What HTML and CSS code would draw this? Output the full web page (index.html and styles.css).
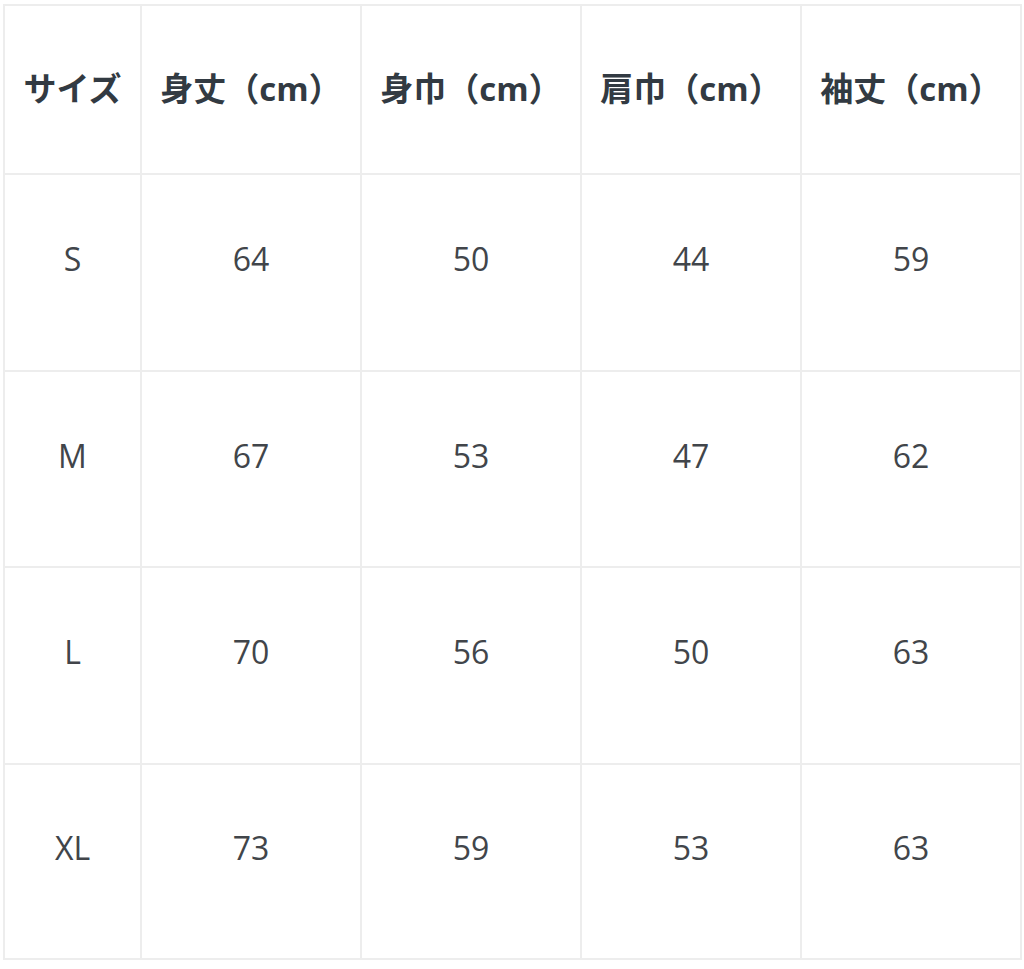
FILE: index.html
```html
<!DOCTYPE html>
<html lang="ja">
<head>
<meta charset="utf-8">
<title>サイズ表</title>
<link rel="stylesheet" href="styles.css">
</head>
<body>
<table class="size-table">
  <colgroup>
    <col class="c-size">
    <col class="c-val">
    <col class="c-val">
    <col class="c-val">
    <col class="c-val">
  </colgroup>
  <thead>
    <tr class="head-row">
      <th>サイズ</th>
      <th>身丈（cm）</th>
      <th>身巾（cm）</th>
      <th>肩巾（cm）</th>
      <th>袖丈（cm）</th>
    </tr>
  </thead>
  <tbody>
    <tr class="row r1"><td>S</td><td>64</td><td>50</td><td>44</td><td>59</td></tr>
    <tr class="row r2"><td>M</td><td>67</td><td>53</td><td>47</td><td>62</td></tr>
    <tr class="row r3"><td>L</td><td>70</td><td>56</td><td>50</td><td>63</td></tr>
    <tr class="row r4"><td>XL</td><td>73</td><td>59</td><td>53</td><td>63</td></tr>
  </tbody>
</table>
</body>
</html>
```

FILE: styles.css
```css
html, body {
  margin: 0;
  padding: 0;
  background: #ffffff;
}

body {
  padding: 4px 0 0 3px;
  font-family: "Open Sans", "Noto Sans CJK JP", sans-serif;
  color: #3a3a3a;
}

.size-table {
  border-collapse: collapse;
  table-layout: fixed;
  width: 1019px;
}

.c-size { width: 137px; }
.c-val { width: 220px; }

.size-table th,
.size-table td {
  border: 2px solid #ededed;
  text-align: center;
  vertical-align: middle;
  padding: 0;
}

.size-table th {
  font-weight: 700;
  font-size: 33px;
  color: #323a42;
  white-space: nowrap;
  padding-bottom: 5px;
}

.head-row { height: 169px; }

.size-table td {
  font-size: 32px;
  font-weight: 400;
  color: #41454a;
  padding-bottom: 28px;
}

.r1 { height: 197px; }
.r2 { height: 196px; }
.r3 { height: 197px; }
.r4 { height: 195px; }
```
